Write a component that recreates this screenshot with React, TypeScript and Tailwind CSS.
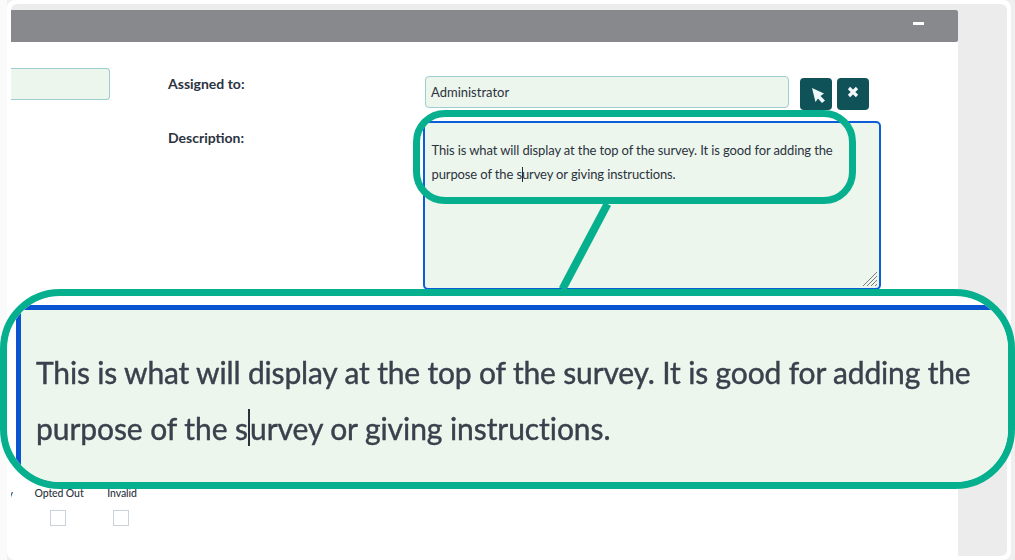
import React from "react";

const teal = "border-[#06b08f]";

const Caret = ({ className }: { className: string }) => (
  <span className={`inline-block w-0 align-top border-l ${className}`} />
);

const CheckColumn = ({ label, width, gap }: { label: string; width: string; gap: string }) => (
  <div className={`flex flex-col items-center ${width} ${gap}`}>
    <span className="text-[10.5px] leading-[13px] tracking-[-0.1px] font-medium text-[#2b3340] whitespace-nowrap">{label}</span>
    <input type="checkbox" readOnly className="appearance-none mt-[10px] -ml-[2px] w-[16px] h-[16px] border border-[#c9d2da] bg-white" />
  </div>
);

export default function App() {
  return (
    <div className="relative flex w-[1015px] h-[560px] overflow-hidden bg-[#efefef] font-['Lato',sans-serif]">
      <div className="w-[7px] bg-[#fafafa] shrink-0" />
      <div className="w-[1004px] h-full bg-white rounded-[8px] p-[4px] shrink-0">
        <div className="flex h-[552px] bg-[#ececec] rounded-[6px] w-[996px]">
          <div className="mt-[6px] w-[947px] h-[546px] bg-white">
            <div className="flex justify-end h-[32px] pt-[12px] pr-[34px] bg-[#88898c] rounded-tr-[2px] rounded-br-[2px]">
              <div className="w-[11px] h-[3px] bg-white" />
            </div>

            <div className="flex pt-[26px] h-[445px]">
              <div className="w-[99px] h-[32px] bg-[#edf6ec] border border-l-0 border-[#9ccdd0] rounded-r-[4px]" />
              <div className="ml-[58px] w-[255px] text-[14px] font-bold text-[#2b3340]">
                <p className="mt-[8px] leading-[16px]">Assigned to:</p>
                <p className="mt-[38px] leading-[16px]">Description:</p>
              </div>
              <div className="pt-[8px] w-[458px]">
                <div className="flex ml-[2px]">
                  <div className="w-[364px] h-[32px] pl-[5px] bg-[#edf6ec] border border-[#9ccdd0] rounded-[4px] text-[13px] leading-[30px] text-[#2b3340]">
                    Administrator
                  </div>
                  <button className="ml-[11px] mt-[2px] w-[32px] h-[32px] bg-[#0f5257] rounded-[4px]">
                    <svg viewBox="0 0 32 32" className="w-[32px] h-[32px]">
                      <polygon points="12,10 24,15.5 20.5,18 25,22.5 22,25 18,20.5 15.5,24" fill="#eef6fa" />
                    </svg>
                  </button>
                  <button className="ml-[5px] mt-[2px] w-[32px] h-[32px] bg-[#0f5257] rounded-[4px]">
                    <svg viewBox="0 0 32 32" className="w-[32px] h-[32px]">
                      <path d="M12 10 L20 18 M20 10 L12 18" stroke="#f3f8fa" strokeWidth="3.2" />
                    </svg>
                  </button>
                </div>
                <div className="relative mt-[11px]">
                  <textarea
                    readOnly
                    defaultValue="This is what will display at the top of the survey. It is good for adding the purpose of the survey or giving instructions."
                    className="block w-[458px] h-[169px] pl-[6.5px] pr-[30px] pt-[15px] bg-[#edf6ec] border-2 border-[#0b5ed7] rounded-[5px] outline-none text-[13px] leading-[24px] tracking-[-0.12px] text-[#2b3340] resize-none"
                  />
                  <span className="absolute left-[99px] top-[46px] h-[15px] border-l border-[#1f2937]" />
                  <svg className="absolute left-[440px] top-[151px]" width="14" height="14" viewBox="0 0 14 14">
                    <path d="M0 14 L14 0 M4 14 L14 4 M8 14 L14 8 M12 14 L14 12" stroke="#7d7d7d" strokeWidth="1" />
                  </svg>
                </div>
              </div>
            </div>

            <div className="flex">
              <div className="flex justify-end w-[2px] overflow-hidden text-[11px] leading-[13px] font-medium text-[#2b3340]">y</div>
              <CheckColumn label="Opted Out" width="w-[48px]" gap="ml-[22px]" />
              <CheckColumn label="Invalid" width="w-[30px]" gap="ml-[24px]" />
            </div>
          </div>
        </div>
      </div>

      {/* callouts on top of the page */}
      <div className={`absolute left-[413px] top-[110px] w-[443px] h-[94px] rounded-[32px] border-[7px] ${teal} pointer-events-none`} />
      <svg className="absolute left-[550px] top-[200px] pointer-events-none" width="70" height="92" viewBox="0 0 70 92">
        <line x1="57.5" y1="4" x2="12.5" y2="89" stroke="#06b08f" strokeWidth="8" />
      </svg>
      <div className={`absolute left-0 top-[289px] w-[1015px] h-[200px] overflow-hidden rounded-[60px] border-[7px] ${teal} bg-white pt-[9px] pl-[9px]`}>
        <div className="h-[200px] pl-[15px] pt-[34px] bg-[#edf6ec] border-t-[5px] border-l-[5px] border-[#0b54d0] text-[30px] leading-[56px] tracking-[-0.16px] text-[#3a404c] [-webkit-text-stroke:0.4px_#3a404c] whitespace-nowrap blur-[0.5px]">
          <p>This is what will display at the top of the survey. It is good for adding the</p>
          <p className="tracking-[-0.07px]">
            purpose of the s
            <Caret className="h-[37px] mt-[9px] border-l-2 border-[#2b3340]" />
            urvey or giving instructions.
          </p>
        </div>
      </div>
    </div>
  );
}
